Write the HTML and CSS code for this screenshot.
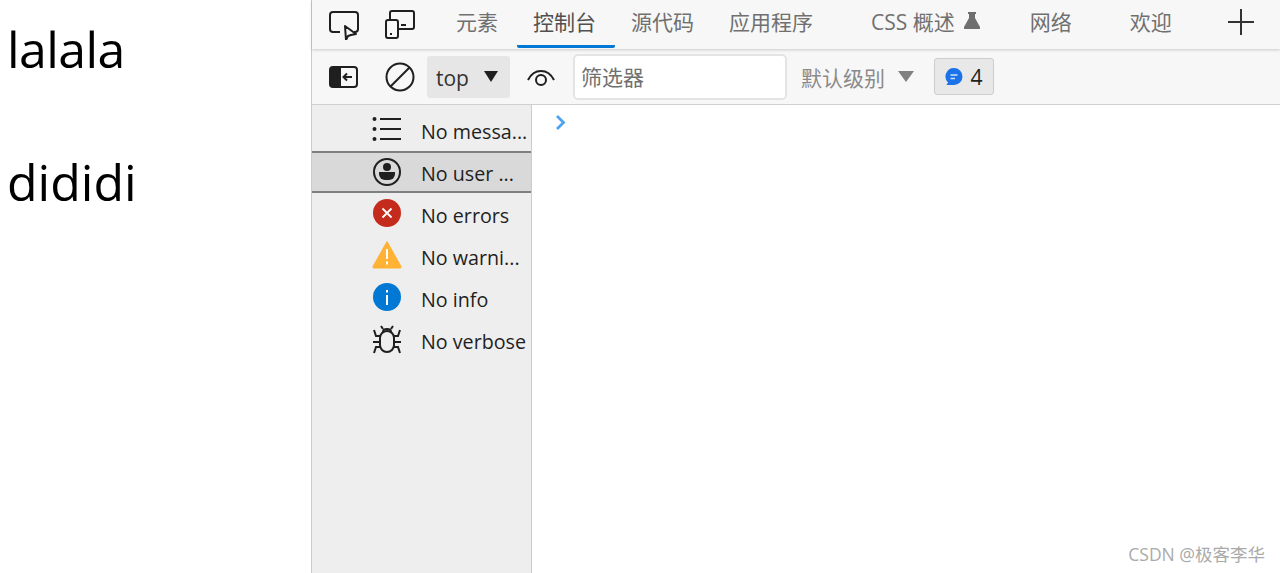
FILE: index.html
```html
<!DOCTYPE html>
<html lang="zh-CN">
<head>
<meta charset="UTF-8">
<link rel="stylesheet" href="styles.css">
<title>lalala</title>
</head>
<body>

<div id="layout">
  <div id="page">
    <p class="tight">lalala</p>
    <p>dididi</p>
  </div>

  <div id="devtools">
    <div id="tabbar">
      <svg class="icon" viewBox="0 0 30 30" fill="none" stroke="#1f1f1f" stroke-width="2">
        <path d="M11 22H4a3 3 0 0 1-3-3V5a3 3 0 0 1 3-3h22a3 3 0 0 1 3 3v14a3 3 0 0 1-3 3h-1"/>
        <path d="M16 16l11 8-5 1-3 1-2 4z" fill="#f7f7f7" stroke-linejoin="round"/>
      </svg>
      <svg class="icon" viewBox="0 0 30 30" fill="none" stroke="#1f1f1f" stroke-width="2">
        <path d="M5 9V3a2 2 0 0 1 2-2h20a2 2 0 0 1 2 2v14a2 2 0 0 1-2 2H14"/>
        <rect x="1" y="10" width="12" height="18" rx="2"/>
        <path d="M16 15h5M5 24h2"/>
      </svg>
      <div class="tab first">元素</div>
      <div class="tab active">控制台</div>
      <div class="tab">源代码</div>
      <div class="tab">应用程序</div>
      <div class="tab css">CSS 概述
        <svg class="flask" viewBox="0 0 16 17" fill="#6f6f6f"><path d="M4 0h8v2h-1v4l5 9a1.300 1.300 0 0 1-1 2H1a1.300 1.300 0 0 1-1-2l5-9V2H4z"/></svg>
      </div>
      <div class="tab net">网络</div>
      <div class="tab welcome">欢迎</div>
      <svg class="plus" viewBox="0 0 26 26" stroke="#333" stroke-width="2"><path d="M0 13h26M13 0v26"/></svg>
    </div>

    <div id="toolbar">
      <svg class="icon" viewBox="0 0 30 30" fill="none" stroke="#1f1f1f" stroke-width="2">
        <rect x="1" y="5" width="27" height="20" rx="3"/>
        <path d="M2 6h9v18H2z" fill="#1f1f1f"/>
        <path d="M23 15h-8M18 11.500L14.500 15l3.500 3.500"/>
      </svg>
      <svg class="icon" viewBox="0 0 30 30" fill="none" stroke="#1f1f1f" stroke-width="2">
        <circle cx="15" cy="15" r="13.500"/>
        <path d="M5.500 24.500l19-19"/>
      </svg>
      <div id="context"><span class="label">top</span> <span class="arrow dark"></span></div>
      <svg class="icon eye" viewBox="0 0 30 30" fill="none" stroke="#1f1f1f" stroke-width="2">
        <path d="M2 18c3-6 7-9 13-9s10 3 13 9"/>
        <circle cx="15" cy="18" r="5"/>
      </svg>
      <input id="filter" type="text" placeholder="筛选器">
      <div id="levels">默认级别 <span class="arrow"></span></div>
      <div id="issues">
        <svg class="bubble" viewBox="0 0 18 18">
          <path d="M9 0a8.500 8.500 0 0 1 0 17H1.500l1.500-2.500A8.500 8.500 0 0 1 9 0z" fill="#1a73e8"/>
          <path d="M5.500 7h7M5.500 10.500h4.500" stroke="#cfe2fb" stroke-width="1.500"/>
        </svg>
        4
      </div>
    </div>

    <div id="panes">
      <div id="sidebar">
        <div class="row">
          <svg class="icon" viewBox="0 0 30 30" stroke="#1f1f1f" stroke-width="2">
            <path d="M8 4h21M8 14h21M8 24h21"/>
            <circle cx="2.500" cy="4" r="1" /><circle cx="2.500" cy="14" r="1"/><circle cx="2.500" cy="24" r="1"/>
          </svg>
          <span>No messa...</span>
        </div>
        <div class="row selected">
          <svg class="icon" viewBox="0 0 30 30">
            <circle cx="15" cy="15" r="13" fill="none" stroke="#1f1f1f" stroke-width="2"/>
            <circle cx="15" cy="10" r="4" fill="#1f1f1f"/>
            <path d="M7 15h16v2a6 6 0 0 1-6 6h-4a6 6 0 0 1-6-6z" fill="#1f1f1f"/>
          </svg>
          <span>No user ...</span>
        </div>
        <div class="row">
          <svg class="icon status" viewBox="0 0 30 30">
            <circle cx="15" cy="15" r="14" fill="#c42b1c"/>
            <path d="M10.500 10.500l9 9M19.500 10.500l-9 9" stroke="#fff" stroke-width="1.800"/>
          </svg>
          <span>No errors</span>
        </div>
        <div class="row">
          <svg class="icon status" viewBox="0 0 30 30">
            <path d="M15 1.500L29 26.500a1 1 0 0 1-1 1.500H2a1 1 0 0 1-1-1.500z" fill="#ffb233" stroke="#ffb233" stroke-linejoin="round"/>
            <path d="M15 9v10M15 21.500v3" stroke="#fff" stroke-width="2"/>
          </svg>
          <span>No warni...</span>
        </div>
        <div class="row">
          <svg class="icon status" viewBox="0 0 30 30">
            <circle cx="15" cy="15" r="14" fill="#0078d4"/>
            <path d="M15 13v10M15 8v2.500" stroke="#fff" stroke-width="2"/>
          </svg>
          <span>No info</span>
        </div>
        <div class="row">
          <svg class="icon" viewBox="0 0 30 30" fill="none" stroke="#1f1f1f" stroke-width="2">
            <rect x="8" y="6" width="14" height="21" rx="7"/>
            <path d="M11 7c0-2 2-3 4-3s4 1 4 3M9 1l2 3M21 1l-2 3"/>
            <path d="M8 11H4L2 5M22 11h4l2-6M1 17h7M22 17h7M8 22H4l-2 6M22 22h4l2 6"/>
          </svg>
          <span>No verbose</span>
        </div>
      </div>
      <div id="console">
        <svg class="chevron" viewBox="0 0 11 15" fill="none" stroke="#4da3ee" stroke-width="2.800"><path d="M2 1l6.500 6.500L2 14"/></svg>
      </div>
    </div>
  </div>
</div>

<div id="watermark">CSDN @极客李华</div>

</body>
</html>
```

FILE: styles.css
```css
html, body {
  margin: 0;
  height: 100%;
  overflow: hidden;
}
body {
  font-family: "Open Sans", "Noto Sans CJK SC", sans-serif;
  background-color: #fff;
}
#layout {
  display: flex;
  height: 573px;
}
#page {
  width: 311px;
  padding: 14px 0 0 7px;
  box-sizing: border-box;
  color: #000;
}
#page p {
  margin: 0 0 62px;
  font-size: 50px;
  line-height: 71px;
}
#page .tight {
  letter-spacing: -0.6px;
}
#devtools {
  flex: 1;
  display: flex;
  flex-direction: column;
  border-left: 1px solid #ccc;
  min-width: 0;
}
.icon {
  width: 30px;
  height: 30px;
  flex: none;
}

#tabbar {
  height: 49px;
  display: flex;
  align-items: center;
  padding-left: 17px;
  gap: 26px;
  background-color: #f7f7f7;
  box-shadow: 0 1px 3px rgba(0, 0, 0, 0.18);
  position: relative;
}
.tab {
  height: 49px;
  line-height: 44px;
  padding: 0 19px 0 16px;
  box-sizing: border-box;
  font-size: 21px;
  color: #707070;
  white-space: nowrap;
  display: flex;
  align-items: flex-start;
  margin-left: -26px;
}
.tab.first {
  margin-left: -1px;
}
.tab.active {
  color: #505050;
  border-bottom: 3px solid #0078d4;
  border-radius: 0 0 2px 2px;
  height: 48px;
  align-self: flex-start;
}
.tab.css {
  margin-left: -3px;
  padding-right: 0;
  gap: 9px;
}
.tab.net {
  margin-left: 8px;
  padding-right: 0;
}
.tab.welcome {
  margin-left: 16px;
  padding-right: 0;
}
.flask {
  width: 16px;
  height: 17px;
  margin-top: 12px;
}
.plus {
  width: 26px;
  height: 26px;
  margin: -6px 0 0 30px;
}

#toolbar {
  height: 56px;
  display: flex;
  align-items: center;
  padding-left: 17px;
  gap: 26px;
  background-color: #f7f7f7;
  border-bottom: 1px solid #d0d0d0;
  box-sizing: border-box;
}
#context {
  width: 83px;
  height: 42px;
  margin-left: -14px;
  padding-left: 9px;
  box-sizing: border-box;
  display: flex;
  align-items: center;
  gap: 15px;
  font-size: 21px;
  color: #333;
  background-color: #e6e6e6;
  border-radius: 3px;
}
#context .label {
  padding-top: 2px;
}
.arrow {
  width: 0;
  height: 0;
  border-left: 8px solid transparent;
  border-right: 8px solid transparent;
  border-top: 11px solid #808080;
}
.arrow.dark {
  border-left-width: 7.5px;
  border-right-width: 7.5px;
  border-top-color: #1f1f1f;
  margin-top: -1px;
}
.eye {
  margin-left: -10px;
}
#filter {
  width: 214px;
  height: 46px;
  margin-left: -9px;
  margin-top: 1px;
  padding: 0 6px;
  box-sizing: border-box;
  font-family: inherit;
  font-size: 21px;
  background-color: #fff;
  border: 2px solid #e4e4e4;
  border-radius: 5px;
  outline: none;
}
#filter::placeholder {
  color: #707070;
}
#levels {
  margin-left: -12px;
  display: flex;
  align-items: center;
  gap: 13px;
  font-size: 21px;
  color: #8a8a8a;
}
#issues {
  width: 60px;
  height: 37px;
  margin-left: -6px;
  box-sizing: border-box;
  display: flex;
  align-items: center;
  justify-content: center;
  gap: 7px;
  font-size: 21px;
  color: #1f1f1f;
  background-color: #e8e8e8;
  border: 1px solid #cdcdcd;
  border-radius: 3px;
}
.bubble {
  width: 18px;
  height: 18px;
}

#panes {
  flex: 1;
  display: flex;
  min-height: 0;
}
#sidebar {
  width: 220px;
  padding-top: 4px;
  box-sizing: border-box;
  background-color: #eee;
  border-right: 1px solid #ccc;
}
.row {
  height: 42px;
  box-sizing: border-box;
  display: flex;
  align-items: center;
  gap: 19px;
  padding-left: 60px;
  font-size: 19.7px;
  color: #1f1f1f;
  white-space: nowrap;
}
.row .status {
  margin-bottom: 2px;
}
.row span {
  padding-top: 2px;
}
.row.selected {
  background-color: #d9d9d9;
  border-top: 2px solid #808080;
  border-bottom: 2px solid #808080;
}
#console {
  flex: 1;
  background-color: #fff;
  padding: 10px 0 0 23px;
}
.chevron {
  display: block;
  width: 11px;
  height: 15px;
}

#watermark {
  position: absolute;
  right: 15px;
  bottom: 7px;
  font-size: 17.5px;
  color: #aaa;
}
```
